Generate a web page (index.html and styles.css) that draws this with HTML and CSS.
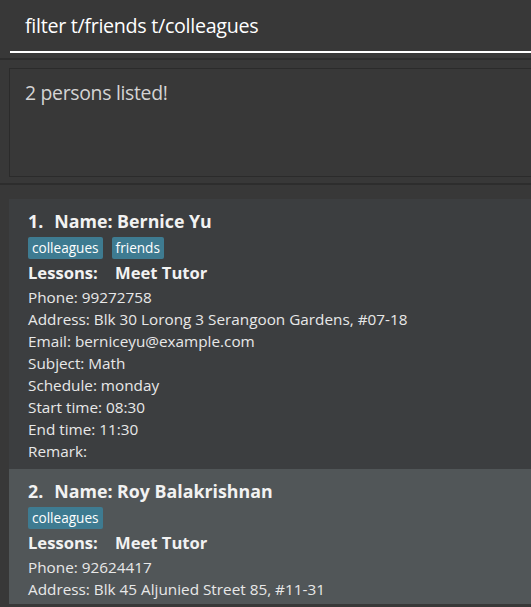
FILE: index.html
```html
<!DOCTYPE html>
<html>
<head>
<meta charset="utf-8">
<link rel="stylesheet" href="styles.css">
</head>
<body>
<div class="app">
  <div class="command-pane">
    <div class="command-box">filter t/friends t/colleagues</div>
  </div>
  <div class="result-pane">
    <div class="result-box">2 persons listed!</div>
  </div>
  <div class="list-pane">
    <div class="card card-even">
      <div class="name"><span class="idx">1.</span><span>Name: Bernice Yu</span></div>
      <div class="tags"><span class="tag">colleagues</span><span class="tag">friends</span></div>
      <div class="lessons"><span class="lab">Lessons:</span><span>Meet Tutor</span></div>
      <div class="field">Phone: 99272758</div>
      <div class="field">Address: Blk 30 Lorong 3 Serangoon Gardens, #07-18</div>
      <div class="field">Email: berniceyu@example.com</div>
      <div class="field">Subject: Math</div>
      <div class="field">Schedule: monday</div>
      <div class="field">Start time: 08:30</div>
      <div class="field">End time: 11:30</div>
      <div class="field">Remark:</div>
    </div>
    <div class="card card-odd card-last">
      <div class="name"><span class="idx">2.</span><span>Name: Roy Balakrishnan</span></div>
      <div class="tags"><span class="tag">colleagues</span></div>
      <div class="lessons"><span class="lab">Lessons:</span><span>Meet Tutor</span></div>
      <div class="field">Phone: 92624417</div>
      <div class="field">Address: Blk 45 Aljunied Street 85, #11-31</div>
    </div>
  </div>
</div>
</body>
</html>
```
FILE: styles.css
```css
html, body {
  margin: 0;
  padding: 0;
  background: #383838;
  height: 100%;
  overflow: hidden;
}
.app {
  font-family: "Open Sans", "Noto Sans", sans-serif;
  display: flex;
  flex-direction: column;
}
.command-pane {
  border-bottom: 2px solid #2d2d2d;
  box-sizing: border-box;
  height: 60px;
}
.command-box {
  margin-left: 10px;
  height: 53px;
  box-sizing: border-box;
  border-bottom: 2px solid #ffffff;
  padding-left: 15px;
  padding-top: 14px;
  color: #ffffff;
  font-size: 19.7px;
  line-height: 24px;
  letter-spacing: -0.3px;
}
.result-pane {
  padding: 8px 0 6px 9px;
  border-bottom: 2px solid #2d2d2d;
}
.result-box {
  height: 109px;
  box-sizing: border-box;
  border: 1px solid #2b2b2b;
  border-right: none;
  padding: 12px 0 0 15px;
  color: #d4d4d4;
  font-size: 19.4px;
  line-height: 24px;
  letter-spacing: -0.3px;
}
.list-pane {
  margin-top: 14px;
  margin-left: 9px;
  display: flex;
  flex-direction: column;
}
.card {
  padding: 10px 0 7px 19px;
}
.card-last {
  padding-bottom: 4px;
}
.card-even { background: #3c3e40; }
.card-odd { background: #515658; }
.name {
  color: #f2f2f2;
  font-weight: 700;
  font-size: 17.8px;
  line-height: 24px;
  display: flex;
  gap: 11px;
}
.tags {
  margin-top: 4px;
  display: flex;
  gap: 9px;
}
.tag {
  background: #3e7b91;
  color: #ffffff;
  font-size: 13.6px;
  height: 22px;
  line-height: 22px;
  padding: 0 4px;
  border-radius: 2px;
}
.lessons {
  margin-top: 2px;
  color: #f2f2f2;
  font-weight: 700;
  font-size: 16.6px;
  line-height: 24px;
  display: flex;
}
.lab {
  width: 87px;
}
.field {
  color: #e8e8e8;
  font-size: 15.3px;
  line-height: 22px;
}
.lessons + .field {
  margin-top: 1px;
}
```
